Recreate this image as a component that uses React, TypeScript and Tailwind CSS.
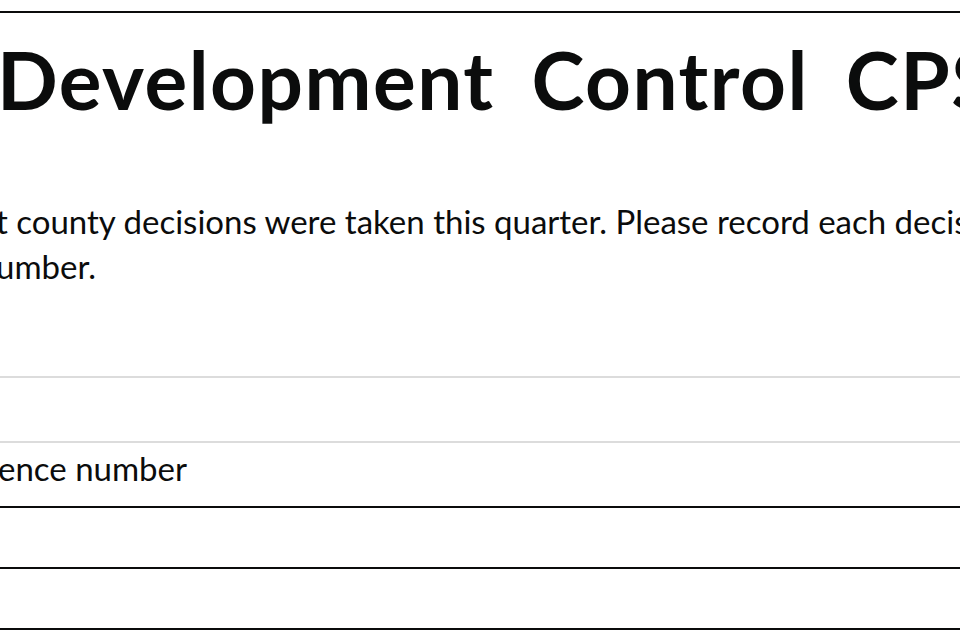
export default function App() {
  return (
    <div className="w-[960px] h-[640px] overflow-hidden bg-white text-[#0b0c0c] font-['Lato',sans-serif]">
      {/* top rule */}
      <div className="mt-[11px] border-t-2 border-[#0b0c0c]" />

      <h1 className="mt-[18px] -ml-[3px] whitespace-nowrap text-[80px] leading-[96px] font-bold tracking-[1.5px] [word-spacing:16px]">
        Development Control CPS
      </h1>

      <div className="mt-[72px] text-[33px] leading-[45px] whitespace-nowrap">
        <p className="-ml-[4px]">t county decisions were taken this quarter. Please record each decision</p>
        <p className="-ml-[4px]">umber.</p>
      </div>

      {/* table rows */}
      <div className="mt-[24px]">
        <div className="h-[65px] border-b-2 border-[#dcdcdc]" />
        <div className="h-[65px] border-b-2 border-[#dcdcdc]" />
        <div className="h-[65px] border-b-2 border-[#0b0c0c] pt-[9px]">
          <span className="block -ml-[2px] text-[33px] leading-[32px] whitespace-nowrap">ence number</span>
        </div>
        <div className="h-[61px] border-b-2 border-[#0b0c0c]" />
        <div className="h-[61px] border-b-2 border-[#0b0c0c]" />
      </div>
    </div>
  )
}
